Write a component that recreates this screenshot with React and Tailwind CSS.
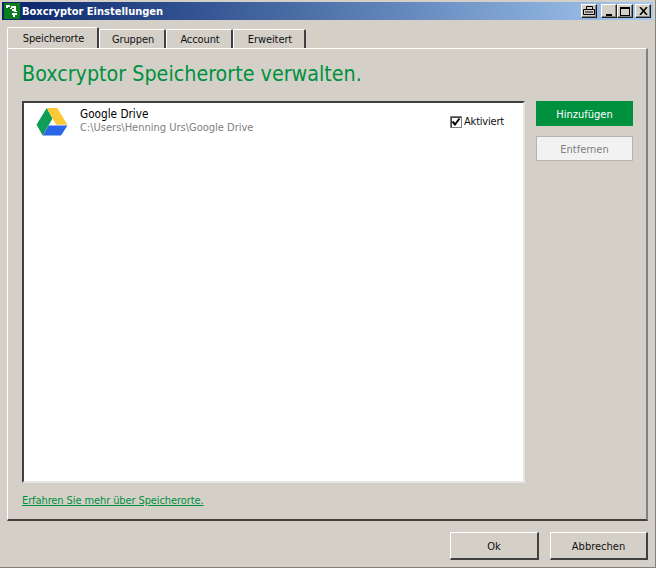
import React from 'react';

const font = 'font-["DejaVu_Sans_Condensed","Noto_Sans",sans-serif]';
const bevel = 'border-t border-l border-t-white border-l-white border-r-2 border-b-2 border-r-[#404040] border-b-[#404040]';

const tabs = ['Gruppen', 'Account', 'Erweitert'];
const tabWidths = ['w-[67px]', 'w-[67px]', 'w-[73px]'];

const CaptionButton = ({ className = '', children }) => (
  <div className={`w-[16px] h-[14px] bg-[#d4d0c8] flex items-center justify-center border-t border-l border-t-white border-l-white border-r border-b border-r-[#202020] border-b-[#202020] shadow-[inset_-1px_-1px_0_#808080] ${className}`}>
    {children}
  </div>
);

const DriveIcon = () => (
  <svg width="32" height="30" viewBox="36 107 32 30">
    <polygon points="46.7,108 36.5,124.7 42.7,135.6 52.5,118.5" fill="#0f9d58" />
    <polygon points="46.7,108 57.3,108 67.5,124.7 56.2,124.7" fill="#fcc934" />
    <polygon points="42.7,135.6 48.6,125.6 67.5,125.6 61,135.6" fill="#2a67e8" />
  </svg>
);

const AppIcon = () => (
  <div className="w-[16px] h-[16px] bg-[#0a7d1e] flex items-center justify-center">
    <svg width="14" height="14" viewBox="0 0 14 14" fill="#fff">
      <rect x="1" y="1" width="4" height="2" />
      <rect x="1" y="3" width="2" height="1" />
      <rect x="5" y="4" width="2" height="1" />
      <rect x="6" y="2" width="5" height="2" />
      <rect x="9" y="4" width="2" height="3" />
      <rect x="7" y="5" width="3" height="2" />
      <rect x="9" y="7" width="3" height="1" />
      <rect x="7" y="9" width="5" height="2" />
      <rect x="8" y="11" width="2" height="2" />
    </svg>
  </div>
);

export default function App() {
  return (
    <div className={`${font} w-[656px] h-[568px] bg-[#d4d0c8] flex flex-col pt-[2px] pl-[2px] pr-[2px] border-r border-b border-r-[#808080] border-b-[#808080] overflow-hidden`}>
      {/* Title bar */}
      <div className="h-[18px] w-[651px] shrink-0 flex items-center justify-between pl-[2px] pr-[2px] bg-gradient-to-r from-[#0a246a] to-[#a6caf0]">
        <div className="flex items-center gap-[2px]">
          <AppIcon />
          <span className="text-white text-[11px] font-bold leading-none">Boxcryptor Einstellungen</span>
        </div>
        <div className="flex items-center">
          <CaptionButton className="mr-[4px]">
            <svg width="12" height="10" viewBox="0 0 12 10" fill="none" stroke="#000">
              <path d="M3.5 .5h6v3h-6zM.5 3.5h11v5h-11zM2 6h8" />
            </svg>
          </CaptionButton>
          <CaptionButton>
            <div className="w-[6px] h-[2px] bg-black mt-[7px] -ml-[1px]" />
          </CaptionButton>
          <CaptionButton>
            <div className="w-[10px] h-[9px] border border-black border-t-2" />
          </CaptionButton>
          <CaptionButton className="ml-[2px]">
            <svg width="9" height="8" viewBox="0 0 9 8" stroke="#000" strokeWidth="1.6">
              <path d="M1 0l7 8M8 0L1 8" />
            </svg>
          </CaptionButton>
        </div>
      </div>

      {/* Tabs */}
      <div className="flex items-end pl-[5px] mt-[8px] h-[20px] shrink-0 relative z-10">
        <div className="w-[92px] h-[21px] pt-[2px] pl-[2px] bg-[#d4d0c8] border-t border-l border-t-white border-l-white border-r-2 border-r-[#404040] rounded-t-[2px] flex items-center justify-center text-[11px] tracking-[-0.15px] text-[#111]">
          Speicherorte
        </div>
        {tabs.map((tab, i) => (
          <div key={tab} className={`${tabWidths[i]} h-[19px] pt-[2px] pl-[2px] bg-[#d4d0c8] border-t border-l border-t-white border-l-white border-r-2 border-r-[#404040] rounded-t-[2px] flex items-center justify-center text-[11px] tracking-[-0.1px] text-[#111]`}>
            {tab}
          </div>
        ))}
      </div>

      {/* Panel */}
      <div className="ml-[5px] w-[641px] h-[473px] shrink-0 border-t border-l border-t-white border-l-white border-r-2 border-b-2 border-r-[#808080] border-b-[#404040] pl-[14px] flex flex-col">
        <h1 className="text-[#00913f] text-[21.3px] leading-[30px] mt-[10px] h-[42px]">Boxcryptor Speicherorte verwalten.</h1>
        <div className="flex">
          <div className="w-[503px] h-[382px] bg-white border-t-2 border-l-2 border-t-[#404040] border-l-[#404040] border-r-2 border-b-2 border-r-[#e8e6e1] border-b-[#e8e6e1] flex items-start justify-between pl-[12px] pt-[4px] pr-[19px]">
            <div className="flex">
              <DriveIcon />
              <div className="ml-[12px]">
                <div className="text-[11.7px] leading-[15px] text-black">Google Drive</div>
                <div className="text-[11px] leading-[12px] text-[#808080]">C:\Users\Henning Urs\Google Drive</div>
              </div>
            </div>
            <div className="flex items-center gap-[2px] mt-[7px]">
              <div className="w-[12px] h-[12px] -mt-[1px] border border-[#808080] shadow-[inset_1px_1px_0_#404040] flex items-center justify-center bg-white">
                <svg width="10" height="10" viewBox="0 0 10 10" fill="none" stroke="#000" strokeWidth="2">
                  <path d="M1.5 4.5l2.5 3 4.5-6" />
                </svg>
              </div>
              <span className="text-[11px] tracking-[-0.2px] text-[#111]">Aktiviert</span>
            </div>
          </div>
          <div className="ml-[11px] flex flex-col gap-[10px]">
            <div className="w-[97px] h-[25px] pt-[3px] bg-[#00913f] text-white text-[11px] font-medium flex items-center justify-center">Hinzufügen</div>
            <div className="w-[97px] h-[25px] pt-[3px] bg-[#f2f2f2] border border-[#b4b4b4] text-[#808080] text-[11px] flex items-center justify-center">Entfernen</div>
          </div>
        </div>
        <a href="#" className="text-[#00913f] text-[11px] tracking-[-0.1px] underline mt-[10px] leading-[15px]">Erfahren Sie mehr über Speicherorte.</a>
      </div>

      {/* Footer */}
      <div className="flex justify-end gap-[11px] pr-[5px] mt-[11px]">
        <div className={`${bevel} w-[89px] h-[28px] pt-[3px] flex items-center justify-center text-[11px] text-[#111]`}>Ok</div>
        <div className={`${bevel} w-[98px] h-[28px] pt-[3px] flex items-center justify-center text-[11px] text-[#111]`}>Abbrechen</div>
      </div>
    </div>
  );
}
